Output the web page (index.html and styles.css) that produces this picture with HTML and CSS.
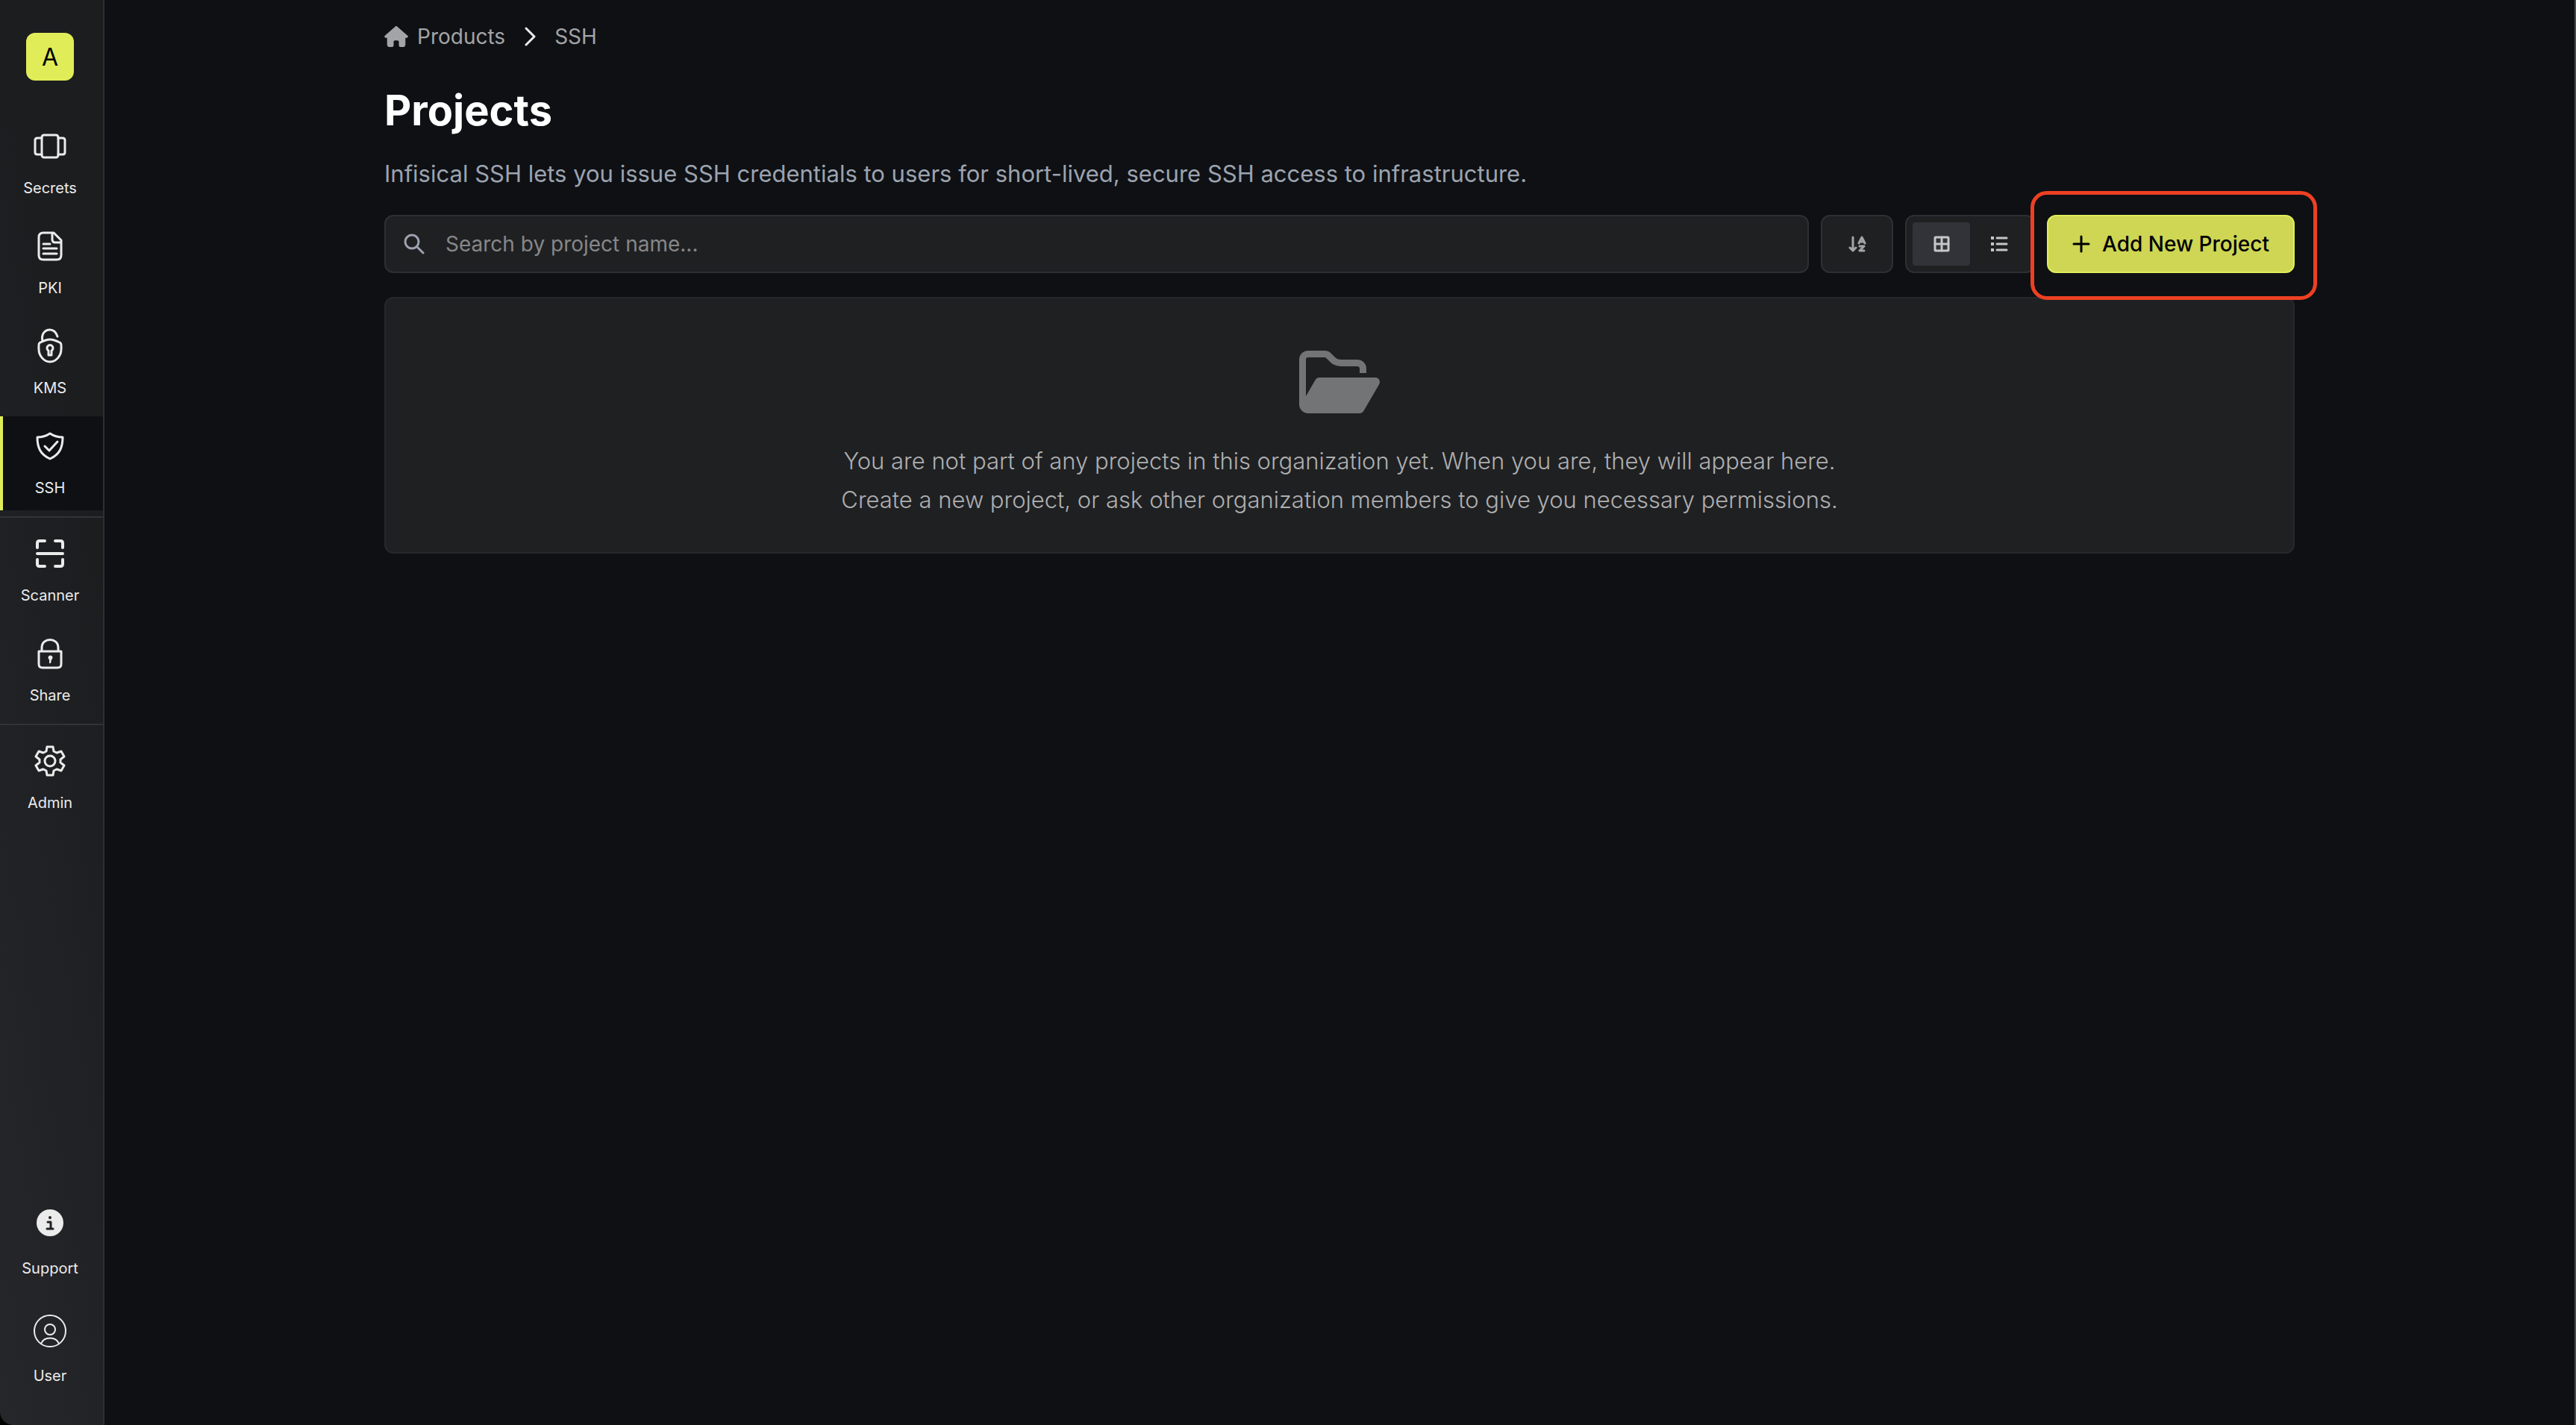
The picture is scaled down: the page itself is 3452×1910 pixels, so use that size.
FILE: index.html
```html
<!DOCTYPE html>
<html lang="en">
<head>
  <meta charset="UTF-8">
  <title>Projects</title>
  <link rel="stylesheet" href="styles.css">
</head>
<body>
  <div id="container">
    <nav id="sidebar">
      <button class="org">A</button>
      <div class="menu">
        <a class="item" href="#secrets">
          <svg width="56" height="56" viewBox="0 0 56 56"><rect x="17" y="13" width="22" height="30" rx="3"/><path d="M17 17h-6q-3 0-3 3v16q0 3 3 3h6M39 17h6q3 0 3 3v16q0 3-3 3h-6"/></svg>
          <span>Secrets</span>
        </a>
        <a class="item" href="#pki">
          <svg width="56" height="56" viewBox="0 0 56 56"><path d="M33 10H19q-6 0-6 6v24q0 6 6 6h18q6 0 6-6V20zM31 10v9q0 4 4 4h8M19 25h9M19 31h18M19 38h18"/></svg>
          <span>PKI</span>
        </a>
        <a class="item" href="#kms">
          <svg width="56" height="56" viewBox="0 0 56 56"><path d="M18 21c-2-8 2-15 10-15 5 0 8 3 10 9M28 19c5 0 9 2 13 4 3 1 2 5 2 9 0 9-7 17-15 17s-15-8-15-17c0-4-1-8 2-9 4-2 8-4 13-4z"/><path d="M26 34a4 4 0 1 1 4 0v6h-4z"/></svg>
          <span>KMS</span>
        </a>
        <a class="item active" href="#ssh">
          <svg width="56" height="56" viewBox="0 0 56 56"><path d="M28 11c6 4 11 5 17 5 0 14-4 23-17 29-13-6-17-15-17-29 6 0 11-1 17-5z"/><path d="M21 28l6 6 11-12"/></svg>
          <span>SSH</span>
        </a>
      </div>
      <div class="menu">
        <a class="item" href="#scanner">
          <svg class="bold" width="56" height="56" viewBox="0 0 56 56"><path d="M11 20v-6q0-3 3-3h7M35 11h7q3 0 3 3v6M45 36v6q0 3-3 3h-7M21 45h-7q-3 0-3-3v-6M11 28h34"/></svg>
          <span>Scanner</span>
        </a>
        <a class="item" href="#share">
          <svg width="56" height="56" viewBox="0 0 56 56"><path d="M13 25h30v17q0 5-5 5H18q-5 0-5-5zM17 25v-5c0-14 22-14 22 0v5"/><path class="solid" d="M27 36a3 3 0 1 1 3 0l-1 5h-2z"/></svg>
          <span>Share</span>
        </a>
      </div>
      <div class="menu">
        <a class="item" href="#admin">
          <svg width="56" height="56" viewBox="0 0 56 56"><path d="M24 9h8l1 6 4 2 6-2 4 7-5 4v4l5 4-4 7-6-2-4 2-1 6h-8l-1-6-4-2-6 2-4-7 5-4v-4l-5-4 4-7 6 2 4-2z"/><circle cx="28" cy="28" r="7"/></svg>
          <span>Admin</span>
        </a>
      </div>
      <div class="menu bottom">
        <a class="item" href="#support">
          <svg width="56" height="56" viewBox="0 0 56 56"><circle class="disc" cx="28" cy="25" r="18"/><circle class="mark" cx="28" cy="18" r="2"/><path class="mark-line" d="M25 24h4v9M24 33h8"/></svg>
          <span>Support</span>
        </a>
        <a class="item" href="#user">
          <svg class="thin" width="56" height="56" viewBox="0 0 56 56"><circle cx="28" cy="26" r="21"/><circle cx="28" cy="24" r="7"/><path d="M16 43c4-10 20-10 24 0"/></svg>
          <span>User</span>
        </a>
      </div>
    </nav>
    <main id="content">
      <div class="page">
        <div class="breadcrumb">
          <a href="#products"><svg class="fill" width="32" height="28" viewBox="0 0 576 512"><path d="M576 256c0 18-15 32-32 32h-32l1 160c0 35-20 64-50 64h-70c-20 0-41-18-41-42v-86c0-18-14-32-32-32h-64c-18 0-32 14-32 32v86c0 24-21 42-41 42h-70c-30 0-50-29-50-64V288H32c-18 0-32-14-32-32 0-9 3-17 10-24L266 8c7-7 15-8 22-8s15 2 21 7l256 225c8 7 12 15 11 24z"/></svg>Products</a>
          <svg class="chevron" width="16" height="26" viewBox="0 0 16 26"><path d="M2 2l11 11L2 24"/></svg>
          <a href="#ssh">SSH</a>
        </div>
        <h1>Projects</h1>
        <p class="description">Infisical SSH lets you issue SSH credentials to users for short-lived, secure SSH access to infrastructure.</p>
        <div class="toolbar">
          <label class="search">
            <svg width="28" height="28" viewBox="0 0 28 28"><circle cx="11" cy="11" r="9"/><path d="M18 18l8 8"/></svg>
            <input type="text" placeholder="Search by project name..." aria-label="Search by project name">
          </label>
          <button class="sort" aria-label="Sort">
            <svg width="24" height="24" viewBox="0 0 24 24"><path d="M6 3v18M2 17l4 4 4-4M14 11l4-8 4 8M15 9h6M15 15h6l-6 6h6"/></svg>
          </button>
          <div class="views">
            <button class="selected" aria-label="Grid view">
              <svg width="22" height="22" viewBox="0 0 22 22"><rect x="2" y="2" width="18" height="18" rx="1"/><path d="M11 2v18M2 11h18"/></svg>
            </button>
            <button aria-label="List view">
              <svg width="24" height="24" viewBox="0 0 24 24"><path d="M9 4h13M9 12h13M9 20h13"/><path class="dots" d="M1 2h4v4H1zM1 10h4v4H1zM1 18h4v4H1z"/></svg>
            </button>
          </div>
          <div class="highlight">
            <button class="add">
              <svg width="24" height="24" viewBox="0 0 24 24"><path d="M12 2v20M2 12h20"/></svg>
              Add New Project
            </button>
          </div>
        </div>
        <section class="empty">
          <svg width="108" height="96" viewBox="0 0 576 512"><path d="M384 480h48c11 0 22-6 28-16l112-192c5-10 5-22 0-32s-17-16-28-16H144c-11 0-22 6-28 16L48 357V96c0-9 7-16 16-16h118c4 0 8 2 11 5l26 26c21 21 50 33 80 33h117c9 0 16 7 16 16v32h48v-32c0-35-29-64-64-64H299c-17 0-33-7-45-19l-27-26c-12-12-28-19-45-19H64C29 32 0 61 0 96v320c0 35 29 64 64 64h320z"/></svg>
          <p>You are not part of any projects in this organization yet. When you are, they will appear here.</p>
          <p>Create a new project, or ask other organization members to give you necessary permissions.</p>
        </section>
      </div>
    </main>
  </div>
</body>
</html>
```
FILE: styles.css
```css
* {
  box-sizing: border-box;
}
body, html {
  margin: 0;
  padding: 0;
  height: 100%;
  background: #000;
  font-family: 'Inter', sans-serif;
}
a {
  color: inherit;
  text-decoration: none;
}
button {
  font-family: inherit;
  cursor: pointer;
}
svg {
  display: block;
  flex: none;
  fill: none;
  stroke: currentColor;
  stroke-width: 3px;
  stroke-linecap: round;
  stroke-linejoin: round;
}
#container {
  display: flex;
  min-height: 100%;
  border-right: 2px solid #4a4a4a;
}
#sidebar {
  width: 140px;
  display: flex;
  flex-direction: column;
  border-right: 2px solid #2d2f33;
  border-bottom-left-radius: 18px;
  background: linear-gradient(80deg, #26272b, #1c1d1f 70%);
  color: #ebebeb;
}
.org {
  width: 64px;
  height: 64px;
  margin: 44px auto 40px 35px;
  padding: 0;
  border: none;
  border-radius: 12px;
  background: #e0ed58;
  color: #000;
  font-size: 32px;
}
.menu {
  display: flex;
  flex-direction: column;
  gap: 8px;
  padding: 8px 0;
  border-bottom: 2px solid #323338;
}
.menu:nth-of-type(n+3) {
  border-bottom: none;
}
.bottom {
  margin-top: auto;
  padding-bottom: 38px;
  gap: 18px;
}
.item {
  height: 126px;
  display: flex;
  flex-direction: column;
  align-items: center;
  gap: 16px;
  padding: 12px 10px 0 6px;
  font-size: 20px;
  line-height: 24px;
}
.bottom .item {
  gap: 18px;
}
.active {
  border-left: 4px solid #e0ed58;
  padding-left: 2px;
  background: #0e1014;
}
.item .bold {
  stroke-width: 4px;
}
.item .thin {
  stroke-width: 2px;
}
.item .solid, .item .disc {
  fill: #ebebeb;
  stroke: none;
}
.item .mark {
  fill: #222326;
  stroke: none;
}
.item .mark-line {
  stroke: #222326;
}
#content {
  flex: 1;
  min-width: 0;
  background: #0e1014;
}
.page {
  max-width: 2560px;
  margin: 0 auto;
}
.breadcrumb {
  display: flex;
  align-items: center;
  height: 98px;
  color: #a3a4a6;
  font-size: 28px;
}
.breadcrumb a {
  display: flex;
  align-items: center;
  gap: 12px;
}
.fill, .empty svg {
  fill: currentColor;
  stroke: none;
}
.chevron {
  margin: 0 24px 0 26px;
  color: #ebebeb;
}
h1 {
  margin: 12px 0 0;
  color: #fff;
  font-size: 56px;
  font-weight: 700;
  line-height: 76px;
}
.description {
  margin: 23px 0 31px;
  color: #9ca3af;
  font-size: 31px;
  line-height: 48px;
}
.toolbar {
  display: flex;
  gap: 16px;
  height: 78px;
  margin-bottom: 32px;
}
.search {
  flex: 1;
  display: flex;
  align-items: center;
  padding-left: 24px;
  border: 2px solid #2d2f33;
  border-radius: 12px;
  background: #1f2022;
  color: #9ca3af;
}
.search input {
  flex: 1;
  height: 100%;
  padding: 0 24px 0 28px;
  border: none;
  outline: none;
  background: none;
  color: #ebebeb;
  font-family: inherit;
  font-size: 28px;
}
.search input::placeholder {
  color: #868789;
}
.sort, .views {
  display: flex;
  align-items: center;
  justify-content: center;
  border: 2px solid #2d2f33;
  border-radius: 12px;
  background: #1f2022;
  color: #a3a4a6;
}
.sort {
  width: 97px;
}
.views {
  width: 174px;
}
.views button {
  width: 77px;
  height: 58px;
  display: flex;
  align-items: center;
  justify-content: center;
  padding: 0;
  border: none;
  border-radius: 4px;
  background: none;
  color: #c5c6c8;
}
.views .selected {
  background: #323338;
}
.views .dots {
  fill: currentColor;
  stroke: none;
}
.highlight {
  position: relative;
  z-index: 1;
}
.highlight::before {
  content: "";
  position: absolute;
  z-index: -1;
  inset: -32px -30px -36px -22px;
  border: 5px solid #ed4023;
  border-radius: 22px;
  background: #0e1014;
  pointer-events: none;
}
.add {
  width: 332px;
  height: 100%;
  display: flex;
  align-items: center;
  justify-content: center;
  gap: 16px;
  padding: 0;
  border: 2px solid #e0ed58;
  border-radius: 12px;
  background: #ced654;
  color: #000;
  font-size: 28px;
  font-weight: 500;
}
.empty {
  display: flex;
  flex-direction: column;
  align-items: center;
  padding: 64px 32px 44px;
  border: 2px solid #27282b;
  border-radius: 12px;
  background: #1f2022;
  color: #737476;
}
.empty svg {
  margin-bottom: 32px;
}
.empty p {
  margin: 0;
  color: #aeafb1;
  font-size: 31px;
  font-weight: 300;
  line-height: 52px;
}
```
